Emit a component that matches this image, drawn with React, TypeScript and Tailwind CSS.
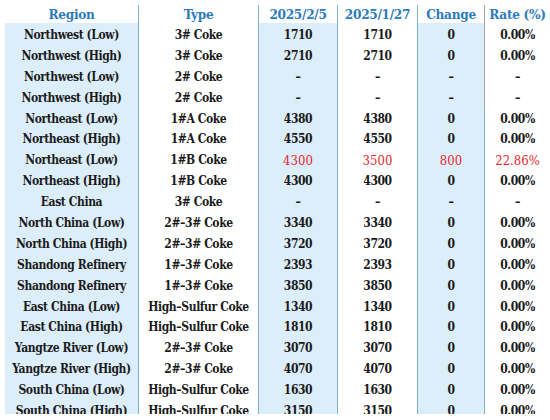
const headers = ["Region", "Type", "2025/2/5", "2025/1/27", "Change", "Rate (%)"];

type Row = [string, string, string, string, string, string];

const rows: Row[] = [
  ["Northwest (Low)", "3# Coke", "1710", "1710", "0", "0.00%"],
  ["Northwest (High)", "3# Coke", "2710", "2710", "0", "0.00%"],
  ["Northwest (Low)", "2# Coke", "–", "–", "–", "–"],
  ["Northwest (High)", "2# Coke", "–", "–", "–", "–"],
  ["Northeast (Low)", "1#A Coke", "4380", "4380", "0", "0.00%"],
  ["Northeast (High)", "1#A Coke", "4550", "4550", "0", "0.00%"],
  ["Northeast (Low)", "1#B Coke", "4300", "3500", "800", "22.86%"],
  ["Northeast (High)", "1#B Coke", "4300", "4300", "0", "0.00%"],
  ["East China", "3# Coke", "–", "–", "–", "–"],
  ["North China (Low)", "2#–3# Coke", "3340", "3340", "0", "0.00%"],
  ["North China (High)", "2#–3# Coke", "3720", "3720", "0", "0.00%"],
  ["Shandong Refinery", "1#–3# Coke", "2393", "2393", "0", "0.00%"],
  ["Shandong Refinery", "1#–3# Coke", "3850", "3850", "0", "0.00%"],
  ["East China (Low)", "High–Sulfur Coke", "1340", "1340", "0", "0.00%"],
  ["East China (High)", "High–Sulfur Coke", "1810", "1810", "0", "0.00%"],
  ["Yangtze River (Low)", "2#–3# Coke", "3070", "3070", "0", "0.00%"],
  ["Yangtze River (High)", "2#–3# Coke", "4070", "4070", "0", "0.00%"],
  ["South China (Low)", "High–Sulfur Coke", "1630", "1630", "0", "0.00%"],
  ["South China (High)", "High–Sulfur Coke", "3150", "3150", "0", "0.00%"],
];

// shaded columns: Region, 2025/2/5, Change
const shaded = [true, false, true, false, true, false];

function borderFor(col: number, row: number) {
  if (col === 5) return "";
  if (col === 4 && row < 4) return "border-r border-[#a3a3a3]";
  return "border-r border-[#7eb0d8]";
}

export default function App() {
  return (
    <div className="h-[420px] w-[550px] overflow-hidden bg-white font-['DejaVu_Serif_Condensed','DejaVu_Serif',serif] font-stretch-condensed">
      <div className="h-[414px] overflow-hidden pt-[5px] pl-[5px]">
        <div className="grid grid-cols-[134px_120px_79px_80px_67px_65px]">
          {headers.map((h, c) => (
            <div
              key={h}
              className={`flex h-[18px] items-center justify-center whitespace-nowrap pt-[1px] text-[13.5px] font-semibold leading-none tracking-[-0.3px] text-[#2b7bbd] ${borderFor(c, -1)}`}
            >
              {h}
            </div>
          ))}
          {rows.map((r, ri) =>
            r.map((cell, c) => {
              const red = ri === 6 && c >= 2;
              return (
                <div
                  key={`${ri}-${c}`}
                  className={`flex h-[20.9px] items-center justify-center whitespace-nowrap pt-[3px] leading-none ${
                    shaded[c] ? "bg-[#ddeefb]" : "bg-white"
                  } ${red ? "text-[13px] font-normal text-[#e8262b]" : "text-[12px] font-bold tracking-[-0.4px] text-[#1a1a1a]"} ${borderFor(c, ri)}`}
                >
                  {cell}
                </div>
              );
            })
          )}
        </div>
      </div>
    </div>
  );
}
